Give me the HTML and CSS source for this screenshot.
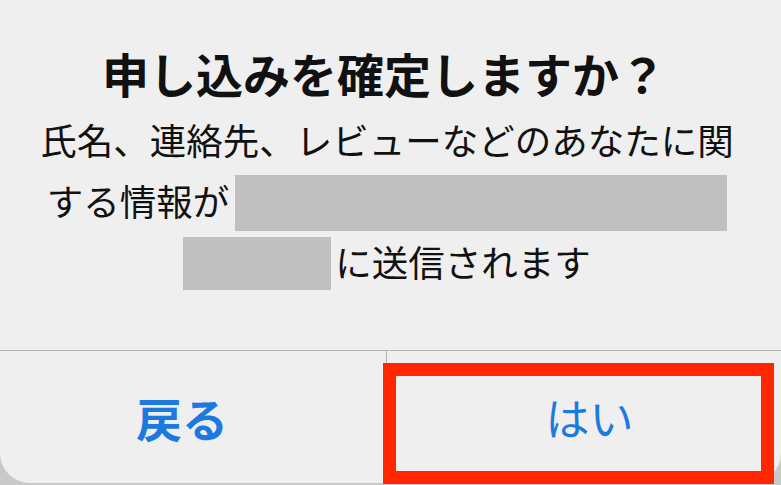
FILE: index.html
```html
<!DOCTYPE html>
<html lang="ja">
<head>
<meta charset="utf-8">
<title>申し込みを確定しますか？</title>
<link rel="stylesheet" href="styles.css">
</head>
<body>
<div class="dialog">
  <div class="content">
    <h1 class="title">申し込みを確定しますか？</h1>
    <div class="message">
      <div class="line">氏名、連絡先、レビューなどのあなたに関</div>
      <div class="line">する情報が<span class="mask mask-wide"></span></div>
      <div class="line"><span class="mask mask-short"></span>に送信されます</div>
    </div>
  </div>
  <div class="actions">
    <div class="btn btn-back">戻る</div>
    <div class="divider"></div>
    <div class="btn btn-yes">はい</div>
  </div>
  <div class="highlight"></div>
</div>
</body>
</html>
```

FILE: styles.css
```css
html, body {
  margin: 0;
  padding: 0;
}
body {
  width: 781px;
  height: 485px;
  background: #c9c9c9;
  font-family: "Noto Sans CJK JP", "Noto Sans", sans-serif;
  overflow: hidden;
}
.dialog {
  position: relative;
  width: 781px;
  height: 483px;
  background: #efefef;
  border-radius: 0 0 30px 30px;
  display: flex;
  flex-direction: column;
}
.content {
  height: 351px;
  box-sizing: border-box;
  padding-top: 45px;
  padding-right: 7px;
  border-bottom: 1px solid #b4b4b4;
  text-align: center;
  color: #111;
}
.title {
  margin: 0;
  font-size: 47px;
  line-height: 56px;
  font-weight: 700;
  margin-left: -6px;
}
.message {
  margin-top: 8px;
  font-size: 36.5px;
  line-height: 61px;
  font-weight: 400;
}
.line {
  height: 61px;
  white-space: nowrap;
}
.mask {
  display: inline-block;
  background: #c0c0c0;
  vertical-align: middle;
}
.mask-wide {
  width: 492px;
  height: 56px;
  margin-left: 6px;
  position: relative;
  top: -3px;
}
.mask-short {
  width: 148px;
  height: 53px;
  margin-right: 4px;
  position: relative;
  top: -4px;
}
.actions {
  flex: 1;
  display: flex;
}
.btn {
  display: flex;
  align-items: center;
  justify-content: center;
  color: #1c79df;
  font-size: 46px;
  line-height: 56px;
}
.btn-back {
  width: 386px;
  font-weight: 700;
  padding-right: 22px;
  box-sizing: border-box;
}
.btn-yes {
  flex: 1;
  font-weight: 400;
  font-size: 44px;
  padding-left: 11px;
}
.divider {
  width: 1px;
  background: #b4b4b4;
}
.highlight {
  position: absolute;
  left: 383px;
  top: 363px;
  width: 391px;
  height: 121px;
  box-sizing: border-box;
  border: 13px solid #ff2600;
}
```
